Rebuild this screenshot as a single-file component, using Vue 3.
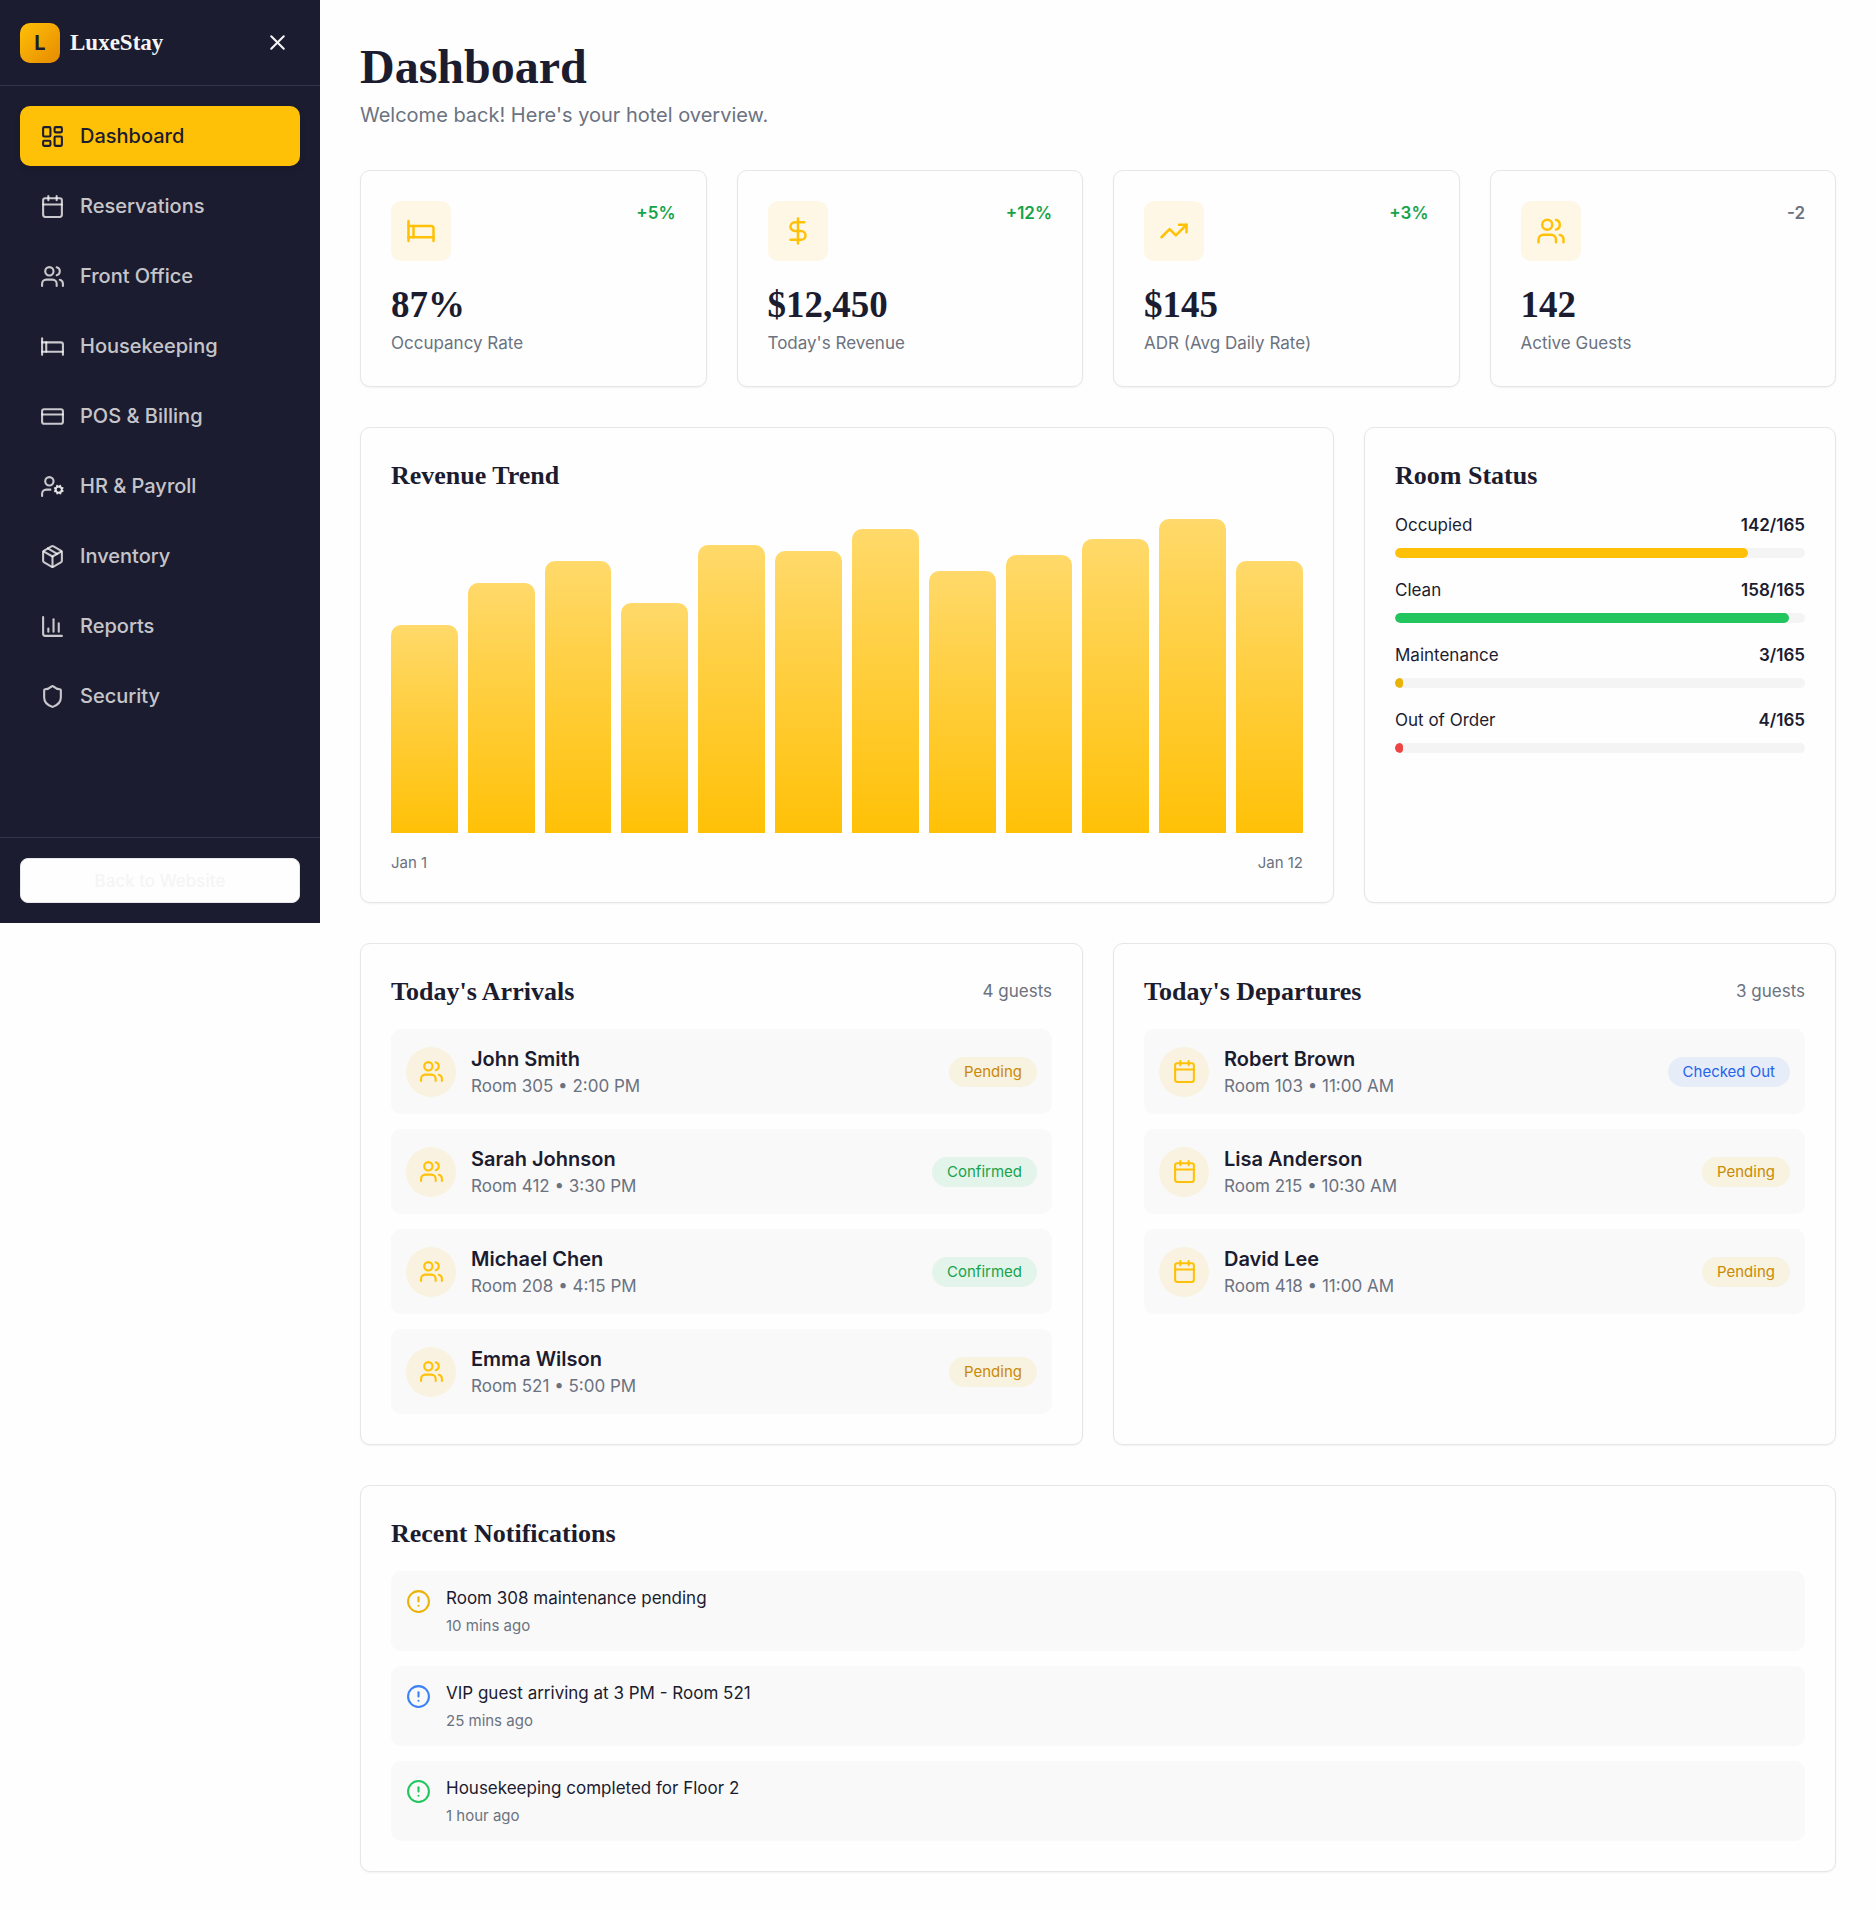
<script setup>
const path = (d) => ['path', { d }]
const rect = (x, y, width, height, rx) => ['rect', { x, y, width, height, rx }]
const circle = (cx, cy, r) => ['circle', { cx, cy, r }]

const icons = {
  dashboard: [rect(3, 3, 7, 9, 1), rect(14, 3, 7, 5, 1), rect(14, 12, 7, 9, 1), rect(3, 16, 7, 5, 1)],
  calendar: [path('M8 2v4'), path('M16 2v4'), rect(3, 4, 18, 18, 2), path('M3 10h18')],
  users: [
    path('M16 21v-2a4 4 0 0 0-4-4H6a4 4 0 0 0-4 4v2'),
    circle(9, 7, 4),
    path('M22 21v-2a4 4 0 0 0-3-3.87'),
    path('M16 3.13a4 4 0 0 1 0 7.75')
  ],
  bed: [path('M2 4v16'), path('M2 8h18a2 2 0 0 1 2 2v10'), path('M2 17h20'), path('M6 8v9')],
  card: [rect(2, 5, 20, 14, 2), path('M2 10h20')],
  userCog: [
    circle(18, 15, 3),
    circle(9, 7, 4),
    path('M10 15H6a4 4 0 0 0-4 4v2'),
    path('m21.7 16.4-.9-.3'),
    path('m15.2 13.9-.9-.3'),
    path('m16.6 18.7.3-.9'),
    path('m19.1 12.2.3-.9'),
    path('m19.6 18.7-.4-1'),
    path('m16.8 12.3-.4-1'),
    path('m14.3 16.6 1-.4'),
    path('m20.7 13.8 1-.4')
  ],
  box: [
    path('m7.5 4.27 9 5.15'),
    path('M21 8a2 2 0 0 0-1-1.73l-7-4a2 2 0 0 0-2 0l-7 4A2 2 0 0 0 3 8v8a2 2 0 0 0 1 1.73l7 4a2 2 0 0 0 2 0l7-4A2 2 0 0 0 21 16Z'),
    path('m3.3 7 8.7 5 8.7-5'),
    path('M12 22V12')
  ],
  chart: [path('M3 3v16a2 2 0 0 0 2 2h16'), path('M18 17V9'), path('M13 17V5'), path('M8 17v-3')],
  shield: [
    path('M20 13c0 5-3.5 7.5-7.66 8.95a1 1 0 0 1-.67-.01C7.5 20.5 4 18 4 13V6a1 1 0 0 1 1-1c2 0 4.5-1.2 6.24-2.72a1.17 1.17 0 0 1 1.52 0C14.51 3.81 17 5 19 5a1 1 0 0 1 1 1z')
  ],
  dollar: [path('M12 2v20'), path('M17 5H9.5a3.5 3.5 0 0 0 0 7h5a3.5 3.5 0 0 1 0 7H6')],
  trend: [path('m22 7-8.5 8.5-5-5L2 17'), path('M16 7h6v6')],
  alert: [circle(12, 12, 10), path('M12 8v4'), path('M12 16h.01')],
  close: [path('M18 6 6 18'), path('m6 6 12 12')]
}

const nav = [
  { label: 'Dashboard', icon: 'dashboard', active: true },
  { label: 'Reservations', icon: 'calendar' },
  { label: 'Front Office', icon: 'users' },
  { label: 'Housekeeping', icon: 'bed' },
  { label: 'POS & Billing', icon: 'card' },
  { label: 'HR & Payroll', icon: 'userCog' },
  { label: 'Inventory', icon: 'box' },
  { label: 'Reports', icon: 'chart' },
  { label: 'Security', icon: 'shield' }
]

const stats = [
  { label: 'Occupancy Rate', value: '87%', change: '+5%', up: true, icon: 'bed' },
  { label: "Today's Revenue", value: '$12,450', change: '+12%', up: true, icon: 'dollar' },
  { label: 'ADR (Avg Daily Rate)', value: '$145', change: '+3%', up: true, icon: 'trend' },
  { label: 'Active Guests', value: '142', change: '-2', up: false, icon: 'users' }
]

const revenue = [65, 78, 85, 72, 90, 88, 95, 82, 87, 92, 98, 85]

const rooms = [
  { label: 'Occupied', count: '142/165', percent: 86, tone: 'gold' },
  { label: 'Clean', count: '158/165', percent: 96, tone: 'green' },
  { label: 'Maintenance', count: '3/165', percent: 2, tone: 'yellow' },
  { label: 'Out of Order', count: '4/165', percent: 2, tone: 'red' }
]

const guestLists = [
  {
    title: "Today's Arrivals",
    icon: 'users',
    guests: [
      { name: 'John Smith', detail: 'Room 305 • 2:00 PM', status: 'Pending' },
      { name: 'Sarah Johnson', detail: 'Room 412 • 3:30 PM', status: 'Confirmed' },
      { name: 'Michael Chen', detail: 'Room 208 • 4:15 PM', status: 'Confirmed' },
      { name: 'Emma Wilson', detail: 'Room 521 • 5:00 PM', status: 'Pending' }
    ]
  },
  {
    title: "Today's Departures",
    icon: 'calendar',
    guests: [
      { name: 'Robert Brown', detail: 'Room 103 • 11:00 AM', status: 'Checked Out' },
      { name: 'Lisa Anderson', detail: 'Room 215 • 10:30 AM', status: 'Pending' },
      { name: 'David Lee', detail: 'Room 418 • 11:00 AM', status: 'Pending' }
    ]
  }
]

const badgeTone = { Pending: 'pending', Confirmed: 'confirmed', 'Checked Out': 'checked-out' }

const notifications = [
  { text: 'Room 308 maintenance pending', time: '10 mins ago', tone: 'warning' },
  { text: 'VIP guest arriving at 3 PM - Room 521', time: '25 mins ago', tone: 'info' },
  { text: 'Housekeeping completed for Floor 2', time: '1 hour ago', tone: 'success' }
]
</script>

<template>
  <div class="layout">
    <aside class="sidebar">
      <div class="brand-bar">
        <a class="brand" href="#">
          <span class="logo">L</span>
          <span class="brand-name">LuxeStay</span>
        </a>
        <button class="close" type="button" aria-label="Close menu">
          <svg class="icon" viewBox="0 0 24 24" aria-hidden="true">
            <component :is="tag" v-for="([tag, attrs], i) in icons.close" :key="i" v-bind="attrs" />
          </svg>
        </button>
      </div>
      <nav class="nav">
        <a v-for="item in nav" :key="item.label" href="#" class="nav-item" :class="{ active: item.active }">
          <svg class="icon" viewBox="0 0 24 24" aria-hidden="true">
            <component :is="tag" v-for="([tag, attrs], i) in icons[item.icon]" :key="i" v-bind="attrs" />
          </svg>
          <span>{{ item.label }}</span>
        </a>
      </nav>
      <div class="sidebar-footer">
        <button class="back" type="button">Back to Website</button>
      </div>
    </aside>

    <main class="main">
      <header class="page-header">
        <h1>Dashboard</h1>
        <p>Welcome back! Here's your hotel overview.</p>
      </header>

      <section class="stats">
        <article v-for="stat in stats" :key="stat.label" class="card">
          <div class="stat-top">
            <span class="stat-icon">
              <svg class="icon large" viewBox="0 0 24 24" aria-hidden="true">
                <component :is="tag" v-for="([tag, attrs], i) in icons[stat.icon]" :key="i" v-bind="attrs" />
              </svg>
            </span>
            <span class="change" :class="{ up: stat.up }">{{ stat.change }}</span>
          </div>
          <p class="stat-value">{{ stat.value }}</p>
          <p class="stat-label">{{ stat.label }}</p>
        </article>
      </section>

      <section class="overview">
        <article class="card trend">
          <h2>Revenue Trend</h2>
          <div class="bars">
            <div v-for="(value, i) in revenue" :key="i" class="bar" :style="{ height: value + '%' }"></div>
          </div>
          <div class="axis">
            <span>Jan 1</span>
            <span>Jan 12</span>
          </div>
        </article>
        <article class="card">
          <h2>Room Status</h2>
          <ul class="rooms">
            <li v-for="room in rooms" :key="room.label">
              <div class="room-line">
                <span>{{ room.label }}</span>
                <strong>{{ room.count }}</strong>
              </div>
              <div class="track">
                <div class="fill" :class="room.tone" :style="{ width: room.percent + '%' }"></div>
              </div>
            </li>
          </ul>
        </article>
      </section>

      <section class="guest-lists">
        <article v-for="list in guestLists" :key="list.title" class="card">
          <div class="list-head">
            <h2>{{ list.title }}</h2>
            <span class="count">{{ list.guests.length }} guests</span>
          </div>
          <ul class="rows">
            <li v-for="guest in list.guests" :key="guest.name" class="row guest">
              <span class="avatar">
                <svg class="icon" viewBox="0 0 24 24" aria-hidden="true">
                  <component :is="tag" v-for="([tag, attrs], i) in icons[list.icon]" :key="i" v-bind="attrs" />
                </svg>
              </span>
              <div class="guest-text">
                <p class="guest-name">{{ guest.name }}</p>
                <p class="guest-detail">{{ guest.detail }}</p>
              </div>
              <span class="badge" :class="badgeTone[guest.status]">{{ guest.status }}</span>
            </li>
          </ul>
        </article>
      </section>

      <section class="card">
        <h2>Recent Notifications</h2>
        <ul class="rows">
          <li v-for="note in notifications" :key="note.text" class="row note">
            <svg class="icon note-icon" :class="note.tone" viewBox="0 0 24 24" aria-hidden="true">
              <component :is="tag" v-for="([tag, attrs], i) in icons.alert" :key="i" v-bind="attrs" />
            </svg>
            <div>
              <p class="note-text">{{ note.text }}</p>
              <p class="note-time">{{ note.time }}</p>
            </div>
          </li>
        </ul>
      </section>
    </main>
  </div>
</template>

<style>
body {
  margin: 0;
  background: #fefefe;
}
</style>

<style scoped>
.layout {
  --navy: #1c1c30;
  --gold: #ffc107;
  --muted: #6b7280;
  --serif: "Liberation Serif", serif;
  display: flex;
  align-items: flex-start;
  font-family: Inter, "Liberation Sans", sans-serif;
  font-size: 20px;
  line-height: 30px;
  color: var(--navy);
}

.layout *,
.layout {
  box-sizing: border-box;
}

h1,
h2,
p,
ul {
  margin: 0;
  padding: 0;
}

ul {
  list-style: none;
}

a {
  color: inherit;
  text-decoration: none;
}

button {
  font: inherit;
  cursor: pointer;
}

.icon {
  display: block;
  flex: none;
  width: 25px;
  height: 25px;
  fill: none;
  stroke: currentColor;
  stroke-width: 2;
  stroke-linecap: round;
  stroke-linejoin: round;
}

.icon.large {
  width: 30px;
  height: 30px;
}

/* Sidebar */
.sidebar {
  flex: none;
  display: flex;
  flex-direction: column;
  width: 320px;
  min-height: 923px;
  background: var(--navy);
  color: #f5f5f5;
}

.brand-bar {
  display: flex;
  align-items: center;
  justify-content: space-between;
  padding: 20px;
  border-bottom: 1px solid #33334a;
}

.brand {
  display: flex;
  align-items: center;
  gap: 10px;
}

.logo {
  display: grid;
  place-items: center;
  width: 40px;
  height: 40px;
  border-radius: 10px;
  background: linear-gradient(135deg, #ffc107, #e68a00);
  color: var(--navy);
  font-weight: 700;
}

.brand-name {
  font-family: var(--serif);
  font-size: 23px;
  font-weight: 700;
}

.close {
  display: grid;
  place-items: center;
  width: 45px;
  height: 45px;
  padding: 0;
  border: 0;
  border-radius: 8px;
  background: none;
  color: inherit;
}

.nav {
  flex: 1;
  display: flex;
  flex-direction: column;
  gap: 10px;
  padding: 20px;
}

.nav-item {
  display: flex;
  align-items: center;
  gap: 15px;
  padding: 15px 20px;
  border-radius: 10px;
  color: rgba(245, 245, 245, 0.8);
  font-weight: 500;
}

.nav-item.active {
  background: var(--gold);
  color: var(--navy);
  box-shadow: 0 4px 6px rgba(0, 0, 0, 0.1);
}

.sidebar-footer {
  padding: 20px;
  border-top: 1px solid #33334a;
}

.back {
  display: block;
  width: 100%;
  height: 45px;
  padding: 0;
  border: 1px solid #e8e8ea;
  border-radius: 8px;
  background: #fefefe;
  color: #f5f5f5;
  font-size: 17px;
  font-weight: 500;
}

/* Main column */
.main {
  flex: 1;
  min-width: 0;
  display: flex;
  flex-direction: column;
  gap: 40px;
  padding: 40px 40px 30px;
}

h1 {
  margin-bottom: 6px;
  font-family: var(--serif);
  font-size: 48px;
  line-height: 54px;
}

.page-header p {
  color: var(--muted);
}

h2 {
  margin-bottom: 20px;
  font-family: var(--serif);
  font-size: 26px;
  line-height: 35px;
}

.card {
  padding: 30px;
  border: 1px solid #e6e6e8;
  border-radius: 10px;
  background: #fefefe;
  box-shadow: 0 1px 2px rgba(0, 0, 0, 0.05);
}

.stats {
  display: grid;
  grid-template-columns: repeat(4, 1fr);
  gap: 30px;
}

.stat-top {
  display: flex;
  align-items: flex-start;
  justify-content: space-between;
  margin-bottom: 20px;
}

.stat-icon {
  display: grid;
  place-items: center;
  width: 60px;
  height: 60px;
  border-radius: 10px;
  background: #fff7e5;
  color: var(--gold);
}

.change {
  color: var(--muted);
  font-size: 17px;
  line-height: 25px;
  font-weight: 600;
}

.change.up {
  color: #16a34a;
}

.stat-value {
  margin-bottom: 2px;
  font-family: var(--serif);
  font-size: 37px;
  line-height: 48px;
  font-weight: 700;
}

.stat-label {
  color: var(--muted);
  font-size: 17px;
  line-height: 25px;
}

/* Revenue and room status */
.overview {
  display: grid;
  grid-template-columns: repeat(3, 1fr);
  gap: 30px;
}

.trend {
  grid-column: span 2;
}

.bars {
  display: flex;
  align-items: flex-end;
  gap: 10px;
  height: 320px;
}

.bar {
  flex: 1;
  border-radius: 10px 10px 0 0;
  background: linear-gradient(to top, #ffc107, #ffd96a);
}

.axis {
  display: flex;
  justify-content: space-between;
  margin-top: 20px;
  color: var(--muted);
  font-size: 15px;
  line-height: 19px;
}

.rooms {
  display: flex;
  flex-direction: column;
  gap: 20px;
}

.room-line {
  display: flex;
  justify-content: space-between;
  margin-bottom: 10px;
  font-size: 17px;
  line-height: 25px;
}

.room-line strong {
  font-weight: 600;
}

.track {
  height: 10px;
  border-radius: 5px;
  background: #f4f4f4;
  overflow: hidden;
}

.fill {
  height: 100%;
  border-radius: 5px;
}

.fill.gold {
  background: var(--gold);
}

.fill.green {
  background: #22c55e;
}

.fill.yellow {
  background: #eab308;
}

.fill.red {
  background: #ef4444;
}

/* Guest lists */
.guest-lists {
  display: grid;
  grid-template-columns: repeat(2, 1fr);
  gap: 30px;
}

.list-head {
  display: flex;
  align-items: flex-start;
  justify-content: space-between;
}

.count {
  color: var(--muted);
  font-size: 17px;
  line-height: 35px;
}

.rows {
  display: flex;
  flex-direction: column;
  gap: 15px;
}

.row {
  display: flex;
  gap: 15px;
  padding: 15px;
  border-radius: 10px;
  background: #f9f9f9;
}

.guest {
  align-items: center;
}

.avatar {
  display: grid;
  place-items: center;
  width: 50px;
  height: 50px;
  border-radius: 50%;
  background: #faf2e0;
  color: var(--gold);
}

.guest-text {
  flex: 1;
}

.guest-name {
  font-weight: 600;
}

.guest-detail {
  color: var(--muted);
  font-size: 17px;
  line-height: 25px;
}

.badge {
  padding: 5px 15px;
  border-radius: 15px;
  font-size: 15px;
  line-height: 20px;
}

.badge.pending {
  background: #f8f2e1;
  color: #ca8a04;
}

.badge.confirmed {
  background: #e3f4ea;
  color: #16a34a;
}

.badge.checked-out {
  background: #e6edf9;
  color: #2563eb;
}

/* Notifications */
.note-icon {
  margin-top: 3px;
}

.note-icon.warning {
  color: #eab308;
}

.note-icon.info {
  color: #3b82f6;
}

.note-icon.success {
  color: #22c55e;
}

.note-text {
  margin-bottom: 5px;
  font-size: 17px;
  line-height: 25px;
}

.note-time {
  color: var(--muted);
  font-size: 15px;
  line-height: 20px;
}
</style>
